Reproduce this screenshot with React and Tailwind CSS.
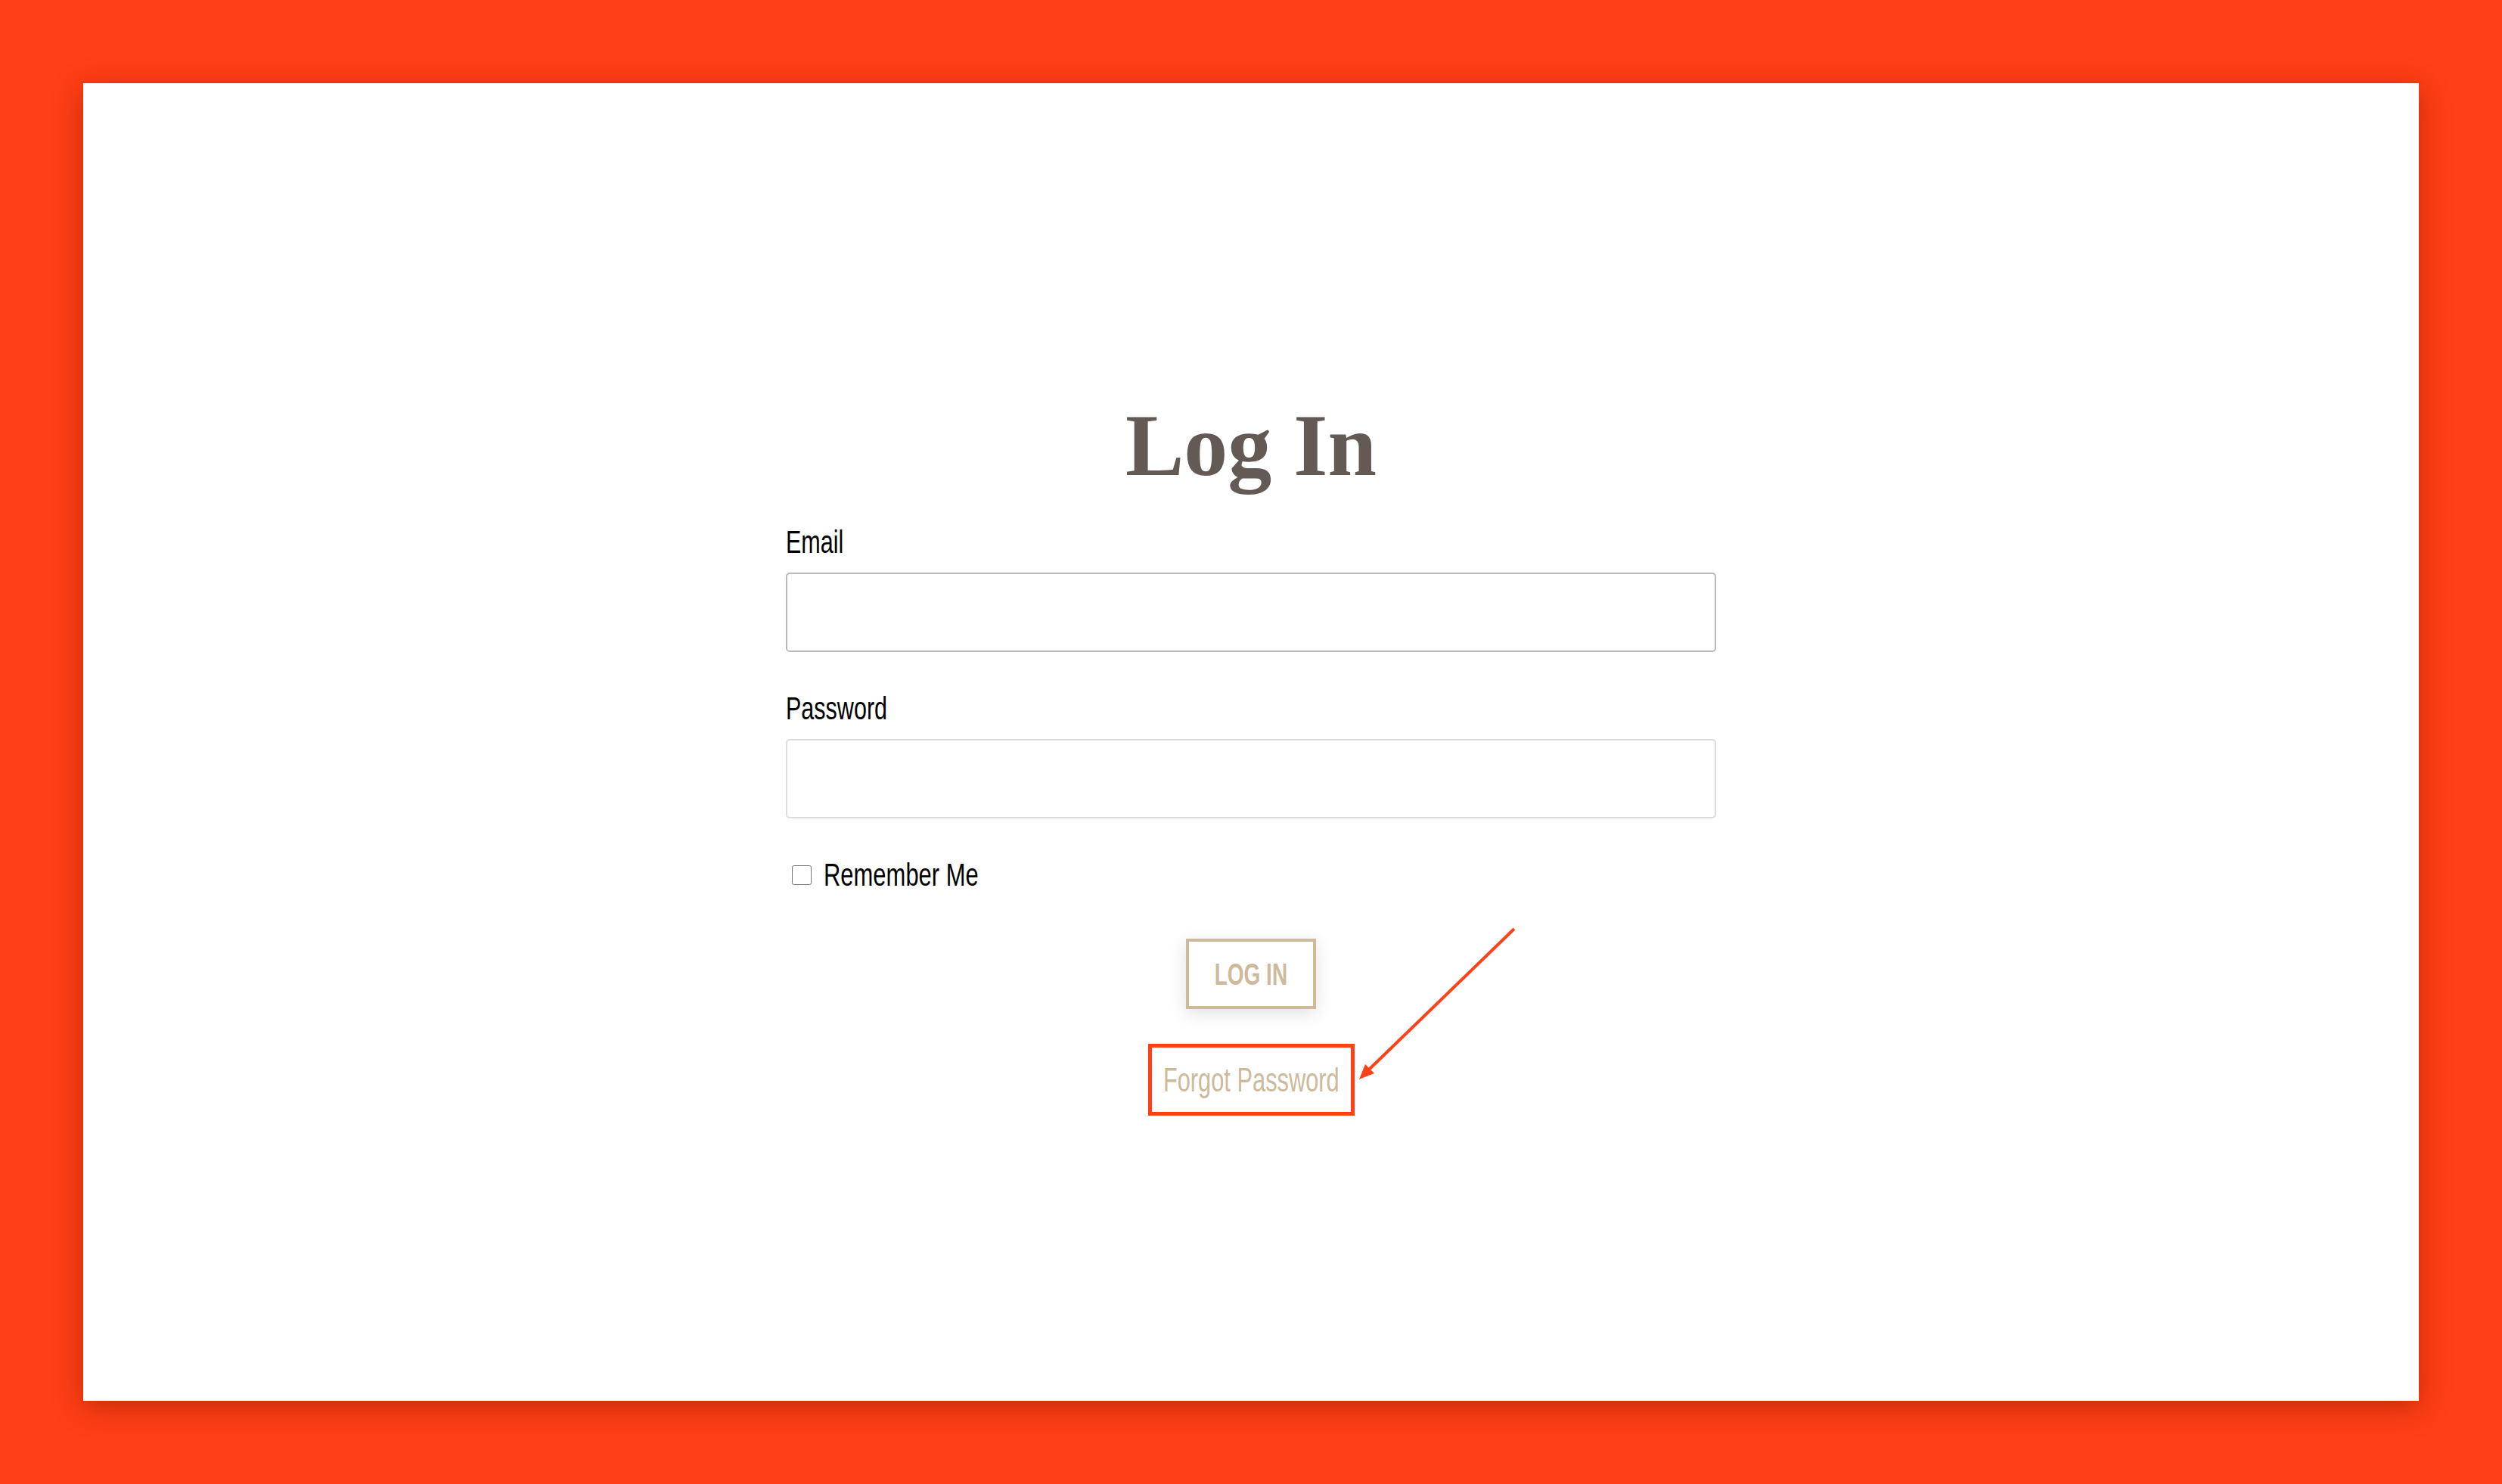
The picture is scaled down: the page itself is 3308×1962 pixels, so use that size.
import { useState } from "react";

// Condensed label face: Liberation Sans squeezed horizontally
const condensed = { fontFamily: '"Liberation Sans", Arial, sans-serif' };

// Red call-out arrow pointing at the forgot-password link
const CalloutArrow = () => (
  <svg
    className="pointer-events-none absolute left-full top-[-160px]"
    width="220"
    height="220"
    viewBox="0 0 220 220"
    fill="none"
  >
    <line x1="211" y1="8" x2="19" y2="194" stroke="#ff4118" strokeWidth="4" />
    <polygon points="6,207 26,199 14,187" fill="#ff4118" />
  </svg>
);

const FieldLabel = ({ htmlFor, children, className = "" }) => (
  <label
    htmlFor={htmlFor}
    className={`block whitespace-nowrap text-[43px] leading-none text-black ${className}`}
    style={condensed}
  >
    <span className="inline-block origin-left scale-x-[0.71]">{children}</span>
  </label>
);

const LoginPage = () => {
  const [formData, setFormData] = useState({ email: "", password: "", remember: false });

  const handleChange = (event) => {
    const { name, type, checked, value } = event.target;
    setFormData((previous) => ({
      ...previous,
      [name]: type === "checkbox" ? checked : value
    }));
  };

  return (
    <div className="h-screen w-full bg-[#ff3f15] p-[110px]">
      <div className="h-full w-full bg-white pt-[421px] shadow-[0_8px_36px_rgba(120,20,0,0.45)]">
        <form
          onSubmit={(event) => event.preventDefault()}
          className="mx-auto flex w-[1230px] flex-col"
        >
          <h1
            className="text-center text-[116px] font-bold leading-none text-[#635a56]"
            style={{ fontFamily: '"Liberation Serif", "DejaVu Serif", serif' }}
          >
            Log In
          </h1>

          <FieldLabel htmlFor="email" className="mt-[48px]">
            Email
          </FieldLabel>
          <input
            id="email"
            name="email"
            type="email"
            value={formData.email}
            onChange={handleChange}
            className="mt-[19px] h-[105px] w-full rounded-[5px] border-2 border-[#b9b9b9] bg-white px-5 text-[36px] outline-none"
          />

          <FieldLabel htmlFor="password" className="mt-[53px]">
            Password
          </FieldLabel>
          <input
            id="password"
            name="password"
            type="password"
            value={formData.password}
            onChange={handleChange}
            className="mt-[19px] h-[105px] w-full rounded-[5px] border-2 border-[#dcdcdc] bg-white px-5 text-[36px] outline-none"
          />

          <label className="mt-[53px] flex items-center gap-[16px] pl-[8px]">
            <input
              type="checkbox"
              name="remember"
              checked={formData.remember}
              onChange={handleChange}
              className="m-0 h-[26px] w-[26px]"
            />
            <span
              className="inline-block origin-left scale-x-[0.72] whitespace-nowrap text-[43px] leading-none text-black"
              style={condensed}
            >
              Remember Me
            </span>
          </label>

          <button
            type="submit"
            className="mx-auto mt-[63px] flex h-[93px] w-[172px] items-center justify-center border-4 border-[#cdb99b] bg-white text-[40px] font-bold uppercase leading-none text-[#cdb99b] shadow-[0_6px_22px_rgba(0,0,0,0.12)]"
            style={condensed}
          >
            <span className="inline-block scale-x-[0.7] whitespace-nowrap">Log In</span>
          </button>

          <div className="relative mx-auto mt-[46px]">
            <a
              href="#"
              className="flex h-[95px] w-[273px] items-center justify-center border-[5px] border-[#ff4118] text-[44px] leading-none text-[#cdb99b]"
              style={condensed}
            >
              <span className="inline-block scale-x-[0.7] whitespace-nowrap">Forgot Password</span>
            </a>
            <CalloutArrow />
          </div>
        </form>
      </div>
    </div>
  );
};

export default LoginPage;
